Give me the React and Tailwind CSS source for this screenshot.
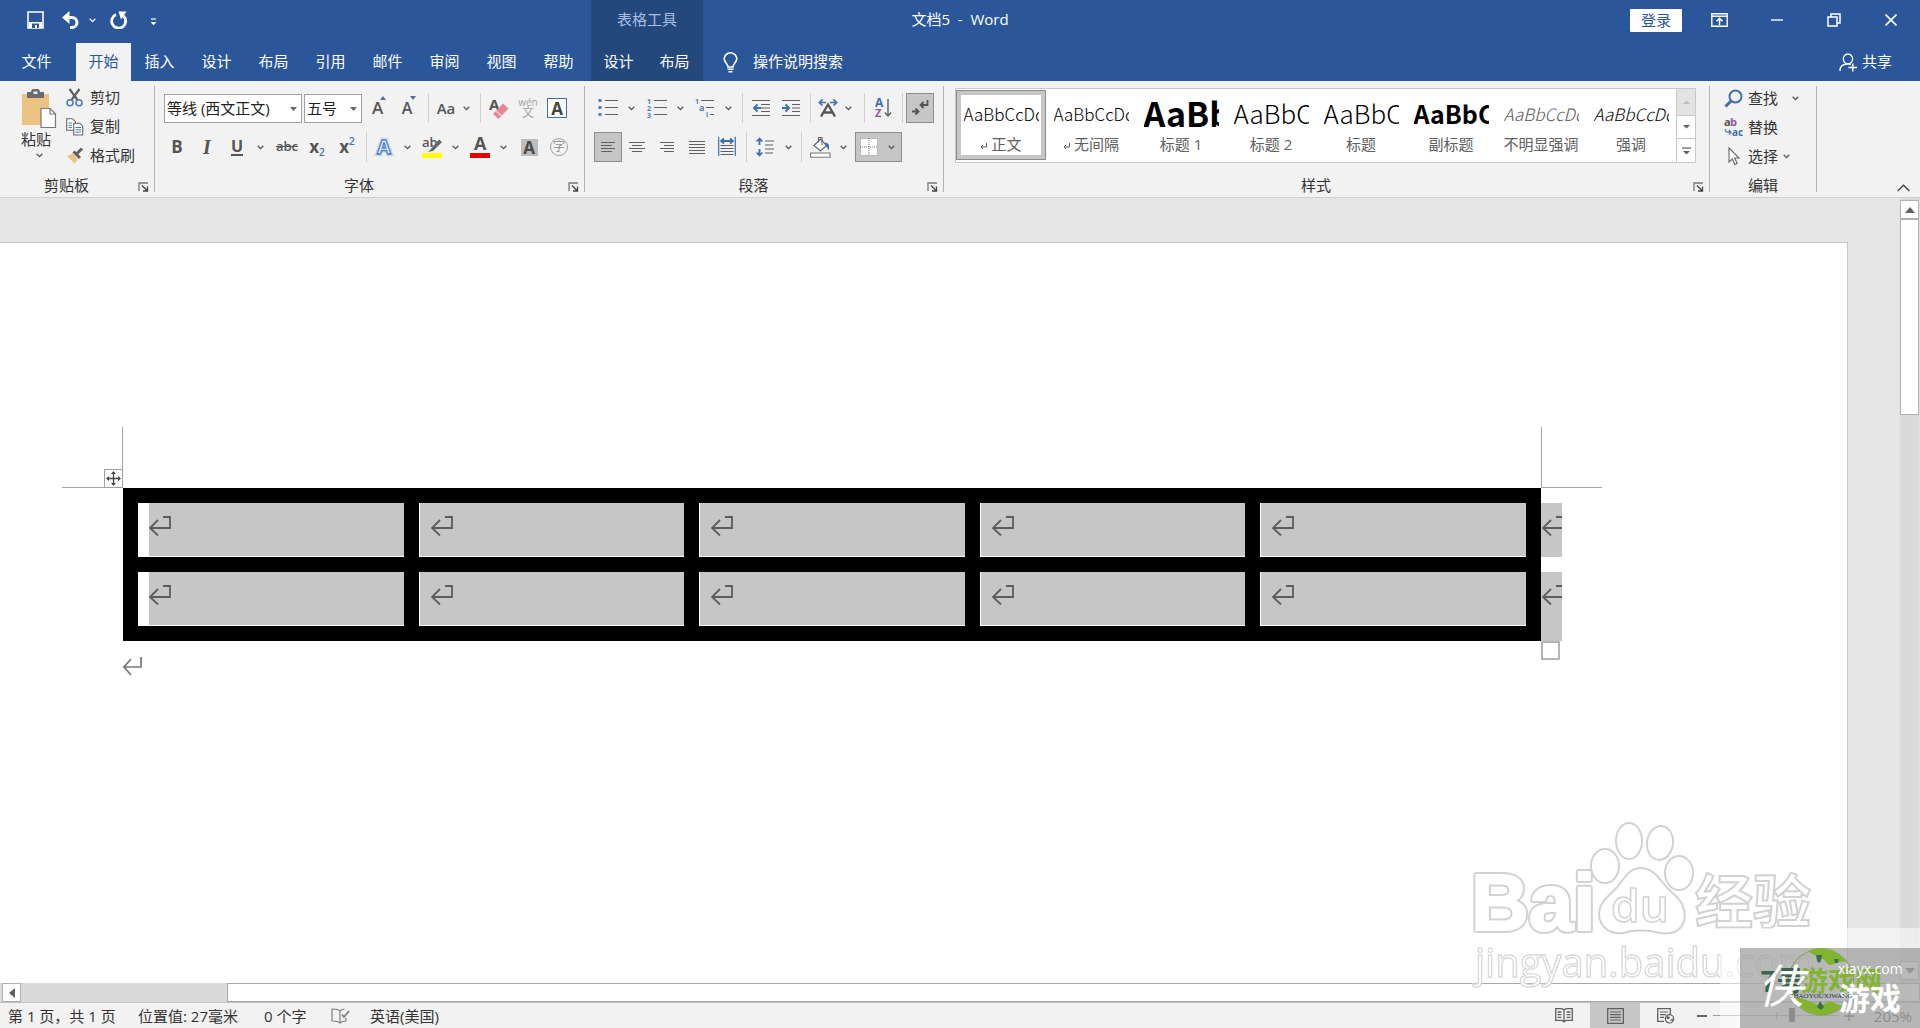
import React from "react";

/* ---------- shared pieces ---------- */

function Svg({ w, h, children, className = "" }) {
  return (
    <svg width={w} height={h} viewBox={`0 0 ${w} ${h}`} fill="none" className={`shrink-0 ${className}`} aria-hidden="true">
      {children}
    </svg>
  );
}

const Caret = () => (
  <Svg w={7} h={5}>
    <path d="M0.7 0.8 L3.5 3.6 L6.3 0.8" stroke="#555" strokeWidth="1.3" />
  </Svg>
);

const Sep = ({ className = "" }) => (
  <span className={`flex w-2 shrink-0 justify-center ${className}`}>
    <span className="h-[30px] w-px bg-[#d0d0d0]" />
  </span>
);

function Tool({ label, children, className = "w-[30px]" }) {
  return (
    <button type="button" aria-label={label} title={label} className={`flex h-[30px] shrink-0 items-center justify-center ${className}`}>
      {children}
    </button>
  );
}

function Split({ label, children, className = "" }) {
  return (
    <span className={`flex shrink-0 ${className}`}>
      <Tool label={label}>{children}</Tool>
      <Tool label={`${label} 选项`} className="w-4">
        <Caret />
      </Tool>
    </span>
  );
}

function Launcher({ label }) {
  return (
    <button type="button" aria-label={label} className="flex w-4 shrink-0 items-center justify-start pt-[2px]">
      <Svg w={11} h={10}>
        <path d="M1 9 V1 H10" stroke="#777" strokeWidth="1.3" />
        <path d="M4 3.5 L9 8.5 M9.5 4.5 V9 H5" stroke="#444" strokeWidth="1.3" />
      </Svg>
    </button>
  );
}

function Group({ label, launcher = true, className = "", children }) {
  return (
    <section aria-label={label} className={`flex h-[106px] shrink-0 flex-col justify-between border-r border-[#b4b4b4] ${className}`}>
      {children}
      <div className="flex h-[13px] items-center text-[15px] leading-[13px] text-[#333]">
        <span className={`flex-1 text-center ${launcher ? "pr-[5px]" : ""}`}>{label}</span>
        {launcher && <Launcher label={`${label}设置`} />}
      </div>
    </section>
  );
}

/* ---------- title bar ---------- */

const TABS = ["插入", "设计", "布局", "引用", "邮件", "审阅", "视图", "帮助"];

function Header() {
  return (
    <header className="relative flex h-[81px] shrink-0 justify-between bg-[#2b579a] text-[15px] text-white">
      <div className="flex">
        <div className="flex w-[591px] flex-col justify-between">
          <div className="flex h-10 items-center pl-[27px]">
            <button type="button" aria-label="保存">
              <Svg w={17} h={18}>
                <path d="M1 1 H16 V17 H1 Z" stroke="#fff" strokeWidth="1.6" />
                <path d="M2 11 H15 V17 H2 Z" fill="#fff" />
                <path d="M5 12.5 H12 V17 H5 Z" fill="#2b579a" />
                <path d="M8 14 H10 V17 H8 Z" fill="#fff" />
              </Svg>
            </button>
            <button type="button" aria-label="撤消" className="ml-[17px]">
              <Svg w={20} h={18}>
                <path d="M5 6.5 H11 A5 5 0 0 1 11 16.5 H9" stroke="#fff" strokeWidth="3" />
                <path d="M8.5 0 L1 6.5 L8.5 13 Z" fill="#fff" />
              </Svg>
            </button>
            <button type="button" aria-label="撤消选项" className="ml-2">
              <Svg w={7} h={5}>
                <path d="M0.7 0.8 L3.5 3.6 L6.3 0.8" stroke="#fff" strokeWidth="1.3" />
              </Svg>
            </button>
            <button type="button" aria-label="重复" className="ml-[14px]">
              <Svg w={18} h={18}>
                <path d="M6 3.6 A7 7 0 1 0 13.5 5" stroke="#fff" strokeWidth="2.8" />
                <path d="M8.5 0.5 H16.5 L11 8.5 Z" fill="#fff" />
              </Svg>
            </button>
            <button type="button" aria-label="自定义快速访问工具栏" className="ml-[22px] mt-1">
              <Svg w={7} h={8}>
                <path d="M1 1 H6" stroke="#fff" strokeWidth="1.2" />
                <path d="M0.5 4 H6.5 L3.5 7.2 Z" fill="#fff" />
              </Svg>
            </button>
          </div>
          <nav className="flex h-[38px] items-stretch">
            <button type="button" className="w-[76px] pr-[3px] pb-[2px]">文件</button>
            <button type="button" className="w-[55px] bg-[#f2f2f2] pb-[2px] text-[#2b579a]">开始</button>
            {TABS.map((t) => (
              <button key={t} type="button" className="w-[57px] pb-[2px]">
                {t}
              </button>
            ))}
          </nav>
        </div>
        <div className="flex w-28 flex-col justify-between bg-[#24477c]">
          <div className="flex h-10 items-center justify-center pb-[2px] text-[#a6bfe4]">表格工具</div>
          <div className="flex h-[38px] pb-[2px]">
            <button type="button" className="w-[55px]">设计</button>
            <button type="button" className="w-[57px]">布局</button>
          </div>
        </div>
        <button type="button" className="flex h-[38px] items-center gap-[15px] self-end pl-5">
          <Svg w={15} h={21}>
            <path d="M5 15 C5 12 1.2 10.5 1.2 6.8 A6.3 6 0 0 1 13.8 6.8 C13.8 10.5 10 12 10 15 Z" stroke="#fff" strokeWidth="1.6" />
            <path d="M4.5 17.2 H10.5 M5.5 19.8 H9.5" stroke="#fff" strokeWidth="1.6" />
          </Svg>
          <span className="pb-[2px]">操作说明搜索</span>
        </button>
      </div>

      <div className="absolute left-1/2 flex h-10 -translate-x-1/2 items-center pb-[2px] whitespace-pre">文档5  -  Word</div>

      <div className="flex flex-col items-end justify-between">
        <div className="flex h-10 items-center pr-[23px]">
          <button type="button" className="h-[23px] w-[52px] rounded-[1px] bg-white leading-[23px] text-[#2b579a]">登录</button>
          <button type="button" aria-label="功能区显示选项" className="ml-[29px]">
            <Svg w={17} h={14}>
              <path d="M0.8 0.8 H16.2 V13.2 H0.8 Z" stroke="#fff" strokeWidth="1.4" />
              <path d="M1 3.2 H16" stroke="#fff" strokeWidth="1.4" />
              <path d="M8.5 12 V5.5 M5.5 8.3 L8.5 5.3 L11.5 8.3" stroke="#fff" strokeWidth="1.5" />
            </Svg>
          </button>
          <button type="button" aria-label="最小化" className="ml-[43px]">
            <Svg w={12} h={14}>
              <path d="M0 7 H12" stroke="#fff" strokeWidth="1.4" />
            </Svg>
          </button>
          <button type="button" aria-label="还原" className="ml-11">
            <Svg w={14} h={14}>
              <path d="M1 4 H10 V13 H1 Z M4 4 V1 H13 V10 H10" stroke="#fff" strokeWidth="1.5" />
            </Svg>
          </button>
          <button type="button" aria-label="关闭" className="ml-11">
            <Svg w={12} h={12}>
              <path d="M0.5 0.5 L11.5 11.5 M11.5 0.5 L0.5 11.5" stroke="#fff" strokeWidth="1.6" />
            </Svg>
          </button>
        </div>
        <button type="button" className="flex h-[38px] items-center gap-1 pr-[28px]">
          <Svg w={19} h={19}>
            <path d="M9 1 A4.7 5 0 1 1 8.9 1 M1 18 C1 13 4.5 11 8.5 11 C10 11 11 11.3 11.8 11.8" stroke="#fff" strokeWidth="1.3" />
            <path d="M9.5 14.5 H18 M13.8 10.5 V18.5" stroke="#fff" strokeWidth="1.4" />
          </Svg>
          <span className="pb-px">共享</span>
        </button>
      </div>
    </header>
  );
}

/* ---------- ribbon groups ---------- */

function ClipboardGroup() {
  return (
    <Group label="剪贴板" className="w-[155px]">
      <div className="flex pl-[21px] pt-[3px]">
        <button type="button" className="flex w-9 flex-col items-center">
          <Svg w={36} h={40}>
            <path d="M1 5 H28 V36 H1 Z" fill="#eac282" />
            <path d="M6 3 H10 A4.5 4 0 0 1 19 3 H23 V9 H6 Z" fill="#6b6b6b" />
            <path d="M12.5 2.5 H16.5 V5 H12.5 Z" fill="#eee" />
            <path d="M20 19.5 H29 L34.5 25 V38.5 H20 Z" fill="#fff" stroke="#777" strokeWidth="1.2" />
            <path d="M29 19.5 V25 H34.5" stroke="#777" strokeWidth="1.2" />
          </Svg>
          <span className="-ml-[6px] text-[15px] leading-5 whitespace-nowrap text-[#333]">粘贴</span>
          <span className="mt-1">
            <Caret />
          </span>
        </button>
        <div className="-mt-[6px] ml-[9px] flex flex-col text-[15px] text-[#333]">
          <button type="button" className="flex h-[29px] items-center gap-[6px]">
            <Svg w={18} h={19}>
              <path d="M3.5 1 L11.5 12 M13.5 1 L5.5 12" stroke="#606060" strokeWidth="2.2" />
              <circle cx="4" cy="14.8" r="3" stroke="#4a7ab5" strokeWidth="1.5" />
              <circle cx="13" cy="14.8" r="3" stroke="#4a7ab5" strokeWidth="1.5" />
            </Svg>
            剪切
          </button>
          <button type="button" className="flex h-[29px] items-center gap-[6px]">
            <Svg w={18} h={18}>
              <path d="M0.7 0.7 H6.5 L9.5 3.7 V12.3 H0.7 Z" fill="#fff" stroke="#666" strokeWidth="1.1" />
              <path d="M2.5 5 H6 M2.5 7.3 H6 M2.5 9.6 H6" stroke="#4a7ab5" />
              <path d="M7.7 5.2 H13.7 L16.7 8.2 V17 H7.7 Z" fill="#fff" stroke="#666" strokeWidth="1.1" />
              <path d="M9.5 9.5 H15 M9.5 11.8 H15 M9.5 14.1 H15" stroke="#4a7ab5" />
            </Svg>
            复制
          </button>
          <button type="button" className="flex h-[29px] items-center gap-[6px]">
            <Svg w={18} h={18}>
              <path d="M1 9 L7 6.5 L12 12 L8.5 16.5 Z" fill="#eac282" />
              <path d="M6.5 5.5 L8.7 3.6 L15 10 L13 12 Z" fill="#606060" />
              <path d="M11 6.5 L16 1.5" stroke="#606060" strokeWidth="3" />
            </Svg>
            格式刷
          </button>
        </div>
      </div>
    </Group>
  );
}

function Combo({ label, value, className }) {
  return (
    <span className={`relative flex h-[29px] shrink-0 ${className}`}>
      <select aria-label={label} defaultValue={value} className="w-full appearance-none border border-[#a0a0a0] bg-white pl-[2px] text-[15px] text-[#222]">
        <option>{value}</option>
      </select>
      <Svg w={7} h={4} className="pointer-events-none absolute top-[13px] right-[5px]">
        <path d="M0 0 H7 L3.5 4 Z" fill="#666" />
      </Svg>
    </span>
  );
}

function FontGroup() {
  return (
    <Group label="字体" className="w-[430px]">
      <div className="flex flex-col gap-[9px] pt-[7px] pl-[7px] text-[#555]">
        <div className="flex items-center pl-[2px]">
          <Combo label="字体名称" value="等线 (西文正文)" className="w-[138px]" />
          <Combo label="字号" value="五号" className="ml-[2px] w-[58px]" />
          <Tool label="增大字号" className="ml-[2px] w-[30px]">
            <span className="flex items-start">
              <span className="text-[17px] leading-6 font-semibold">A</span>
              <Svg w={6} h={4} className="-ml-[3px]">
                <path d="M0 4 H6 L3 0 Z" fill="#4a6fa8" />
              </Svg>
            </span>
          </Tool>
          <Tool label="减小字号">
            <span className="flex items-start">
              <span className="text-base leading-6 font-semibold">A</span>
              <Svg w={6} h={4} className="-ml-[2px]">
                <path d="M0 0 H6 L3 4 Z" fill="#4a6fa8" />
              </Svg>
            </span>
          </Tool>
          <Sep />
          <Tool label="更改大小写" className="w-7">
            <span className="text-[15px] font-semibold">Aa</span>
          </Tool>
          <Tool label="大小写选项" className="w-3">
            <Caret />
          </Tool>
          <Sep className="ml-[4px]" />
          <Tool label="清除所有格式">
            <Svg w={20} h={23}>
              <text x="0" y="13" fontFamily="Open Sans" fontWeight="700" fontSize="15" fill="#555">A</text>
              <path d="M4 17 L14 6.5 L19.5 11.5 L9.5 22 Z" fill="#e88794" />
              <path d="M7 14 L12.5 19" stroke="#f7d3d7" strokeWidth="1.2" />
            </Svg>
          </Tool>
          <Tool label="拼音指南" className="w-7">
            <span className="flex flex-col items-center text-[#a3a3a3]">
              <span className="text-[10px] leading-[8px]">wén</span>
              <span className="text-xs leading-[13px]">文</span>
            </span>
          </Tool>
          <Tool label="字符边框">
            <span className="flex h-5 w-5 items-center justify-center border border-[#3f6fae] bg-white text-[17px] leading-none font-bold text-[#444]">A</span>
          </Tool>
        </div>
        <div className="flex items-center">
          <Tool label="加粗">
            <span className="text-[17px] font-bold">B</span>
          </Tool>
          <Tool label="倾斜">
            <span className="font-['Liberation_Serif',serif] text-xl font-bold italic">I</span>
          </Tool>
          <Split label="下划线" className="mr-1">
            <span className="border-b-2 border-[#555] text-base leading-4 font-bold">U</span>
          </Split>
          <Tool label="删除线">
            <span className="text-[13px] font-semibold line-through">abc</span>
          </Tool>
          <Tool label="下标">
            <span className="flex items-end">
              <span className="text-[17px] leading-5 font-bold">x</span>
              <span className="text-[10px] leading-[10px] font-semibold text-[#3f6fae]">2</span>
            </span>
          </Tool>
          <Tool label="上标">
            <span className="flex items-start">
              <span className="text-[17px] leading-5 font-bold">x</span>
              <span className="text-[10px] leading-[8px] font-semibold text-[#3f6fae]">2</span>
            </span>
          </Tool>
          <Sep />
          <Split label="文本效果" className="-ml-px mr-[2px]">
            <Svg w={20} h={22}>
              <text x="3" y="18" fontFamily="Open Sans" fontWeight="700" fontSize="20" fill="#fff" stroke="#c3d9f3" strokeWidth="4">A</text>
              <text x="3" y="18" fontFamily="Open Sans" fontWeight="700" fontSize="20" fill="#fff" stroke="#4a80c4" strokeWidth="1.3">A</text>
            </Svg>
          </Split>
          <Split label="突出显示颜色" className="mr-[2px]">
            <Svg w={21} h={22}>
              <text x="0" y="11" fontFamily="Open Sans" fontWeight="600" fontSize="13" fill="#555">ab</text>
              <path d="M8 14 L17 3.5 L20 6 L11 15 L6 16 Z" fill="#666" />
              <path d="M0 17 H20 V22 H0 Z" fill="#ffff00" />
            </Svg>
          </Split>
          <Split label="字体颜色" className="mr-[3px]">
            <Svg w={20} h={22}>
              <text x="4" y="14" fontFamily="Open Sans" fontWeight="700" fontSize="18" fill="#555">A</text>
              <path d="M0 17 H20 V22 H0 Z" fill="#e80000" />
            </Svg>
          </Split>
          <Tool label="字符底纹">
            <span className="flex h-[17px] w-[17px] items-center justify-center bg-[#bdbdbd] text-[17px] leading-none font-bold text-[#4a4a4a]">A</span>
          </Tool>
          <Tool label="带圈字符">
            <span className="flex h-[18px] w-[18px] items-center justify-center rounded-full border border-[#a3a3a3] text-xs leading-none text-[#8e8e8e]">字</span>
          </Tool>
        </div>
      </div>
    </Group>
  );
}

/* A paragraph-alignment drawing: each entry is the [start, end] of one rule. */
function Lines({ rows, step = 3 }) {
  return (
    <Svg w={18} h={rows.length * step}>
      {rows.map(([a, b], i) => (
        <path key={i} d={`M${a} ${i * step + 1.5} H${b}`} stroke="#606060" strokeWidth="1" shapeRendering="crispEdges" />
      ))}
    </Svg>
  );
}

function ParagraphGroup() {
  return (
    <Group label="段落" className="w-[359px]">
      <div className="flex flex-col gap-[9px] pt-[7px] pl-2">
        <div className="flex items-center">
          <Split label="项目符号" className="mr-[3px]">
            <Svg w={20} h={20}>
              <path d="M0.5 1 H3.5 V4 H0.5 Z M0.5 8 H3.5 V11 H0.5 Z M0.5 15 H3.5 V18 H0.5 Z" fill="#4a80c4" />
              <path d="M7 2.5 H20 M7 9.5 H20 M7 16.5 H20" stroke="#606060" strokeWidth="1.2" />
            </Svg>
          </Split>
          <Split label="编号" className="mr-[2px]">
            <Svg w={20} h={20}>
              <text x="0" y="6" fontFamily="Open Sans" fontWeight="700" fontSize="7" fill="#4a80c4">1</text>
              <text x="0" y="13" fontFamily="Open Sans" fontWeight="700" fontSize="7" fill="#4a80c4">2</text>
              <text x="0" y="20" fontFamily="Open Sans" fontWeight="700" fontSize="7" fill="#4a80c4">3</text>
              <path d="M7 2.5 H20 M7 9.5 H20 M7 16.5 H20" stroke="#606060" strokeWidth="1.2" />
            </Svg>
          </Split>
          <Split label="多级列表" className="mr-[2px]">
            <Svg w={20} h={20}>
              <text x="0" y="6" fontFamily="Open Sans" fontWeight="700" fontSize="7" fill="#4a80c4">1</text>
              <text x="4" y="13" fontFamily="Open Sans" fontWeight="700" fontSize="9" fill="#4a80c4">a</text>
              <text x="11" y="19" fontFamily="Open Sans" fontWeight="700" fontSize="7" fill="#4a80c4">i</text>
              <path d="M6 2.5 H19 M11 9.5 H19 M15 16.5 H19" stroke="#606060" strokeWidth="1.2" />
            </Svg>
          </Split>
          <Sep />
          <Tool label="减少缩进量">
            <Svg w={19} h={18}>
              <path d="M0 1.5 H18 M9 5.5 H18 M9 9 H18 M9 12.5 H18 M0 16.5 H18" stroke="#606060" strokeWidth="1.1" />
              <path d="M9 9 H2 M5.5 5.5 L2 9 L5.5 12.5" stroke="#3f6fae" strokeWidth="2" />
            </Svg>
          </Tool>
          <Tool label="增加缩进量">
            <Svg w={19} h={18}>
              <path d="M0 1.5 H18 M10 5.5 H18 M10 9 H18 M10 12.5 H18 M0 16.5 H18" stroke="#606060" strokeWidth="1.1" />
              <path d="M0 9 H7 M3.5 5.5 L7 9 L3.5 12.5" stroke="#3f6fae" strokeWidth="2" />
            </Svg>
          </Tool>
          <Sep />
          <Tool label="中文版式" className="w-7">
            <Svg w={20} h={18}>
              <path d="M2 3.5 H8 M12 3.5 H18 M4.5 0.5 L1.3 3.5 L4.5 6.5 M15.5 0.5 L18.7 3.5 L15.5 6.5" stroke="#3f6fae" strokeWidth="1.6" />
              <path d="M3 17.5 L10 5.5 L17 17.5 M6 13.5 H14" stroke="#555" strokeWidth="2.3" />
            </Svg>
          </Tool>
          <Tool label="中文版式选项" className="w-3">
            <Caret />
          </Tool>
          <Sep className="ml-[6px]" />
          <Tool label="排序">
            <Svg w={17} h={20}>
              <text x="0" y="9" fontFamily="Open Sans" fontWeight="700" fontSize="12" fill="#3f6fae">A</text>
              <text x="0" y="19" fontFamily="Open Sans" fontWeight="700" fontSize="11" fill="#9355a8">Z</text>
              <path d="M13 1 V18 M9.8 14.5 L13 18 L16.2 14.5" stroke="#606060" strokeWidth="1.4" />
            </Svg>
          </Tool>
          <Sep />
          <Tool label="显示编辑标记" className="w-7 border border-[#8c8c8c] bg-[#c6c6c6]">
            <Svg w={18} h={18}>
              <path d="M16.5 1 V6 H10 M12.5 3 L9.5 6 L12.5 9" stroke="#555" strokeWidth="1.8" />
              <path d="M1 12.5 H7 M4.5 9.5 L7.5 12.5 L4.5 15.5" stroke="#555" strokeWidth="1.8" />
            </Svg>
          </Tool>
        </div>
        <div className="flex items-center">
          <Tool label="左对齐" className="ml-px w-7 border border-[#8c8c8c] bg-[#c6c6c6]">
            <Lines rows={[[2, 16], [2, 13], [2, 16], [2, 13]]} />
          </Tool>
          <Tool label="居中">
            <Lines rows={[[1, 17], [4, 14], [1, 17], [4, 14]]} />
          </Tool>
          <Tool label="右对齐">
            <Lines rows={[[2, 16], [6, 16], [2, 16], [6, 16]]} />
          </Tool>
          <Tool label="两端对齐">
            <Lines rows={[[1, 17], [1, 17], [1, 17], [1, 17], [1, 17]]} />
          </Tool>
          <Tool label="分散对齐">
            <Svg w={19} h={20}>
              <path d="M0.7 0 V19 M17.3 0 V19" stroke="#3f6fae" strokeWidth="1.2" />
              <path d="M4 4 H14 M6 1.3 L3 4 L6 6.7 M12 1.3 L15 4 L12 6.7" stroke="#3f6fae" strokeWidth="1.8" />
              <path d="M2.5 8.5 H15.5 M2.5 11.5 H15.5 M2.5 14.5 H15.5 M2.5 17.5 H15.5" stroke="#606060" strokeWidth="1.2" />
            </Svg>
          </Tool>
          <Sep />
          <Split label="行和段落间距">
            <Svg w={19} h={20}>
              <path d="M3.5 2 V8 M3.5 12 V18 M0.7 4.5 L3.5 1.5 L6.3 4.5 M0.7 15.5 L3.5 18.5 L6.3 15.5" stroke="#3f6fae" strokeWidth="1.8" />
              <path d="M9 4 H18 M9 8 H17 M9 12 H18 M9 16 H17" stroke="#606060" strokeWidth="1.2" />
            </Svg>
          </Split>
          <Sep className="ml-px" />
          <Split label="底纹" className="mr-1">
            <Svg w={21} h={22}>
              <path d="M4 9.5 L10.5 3 L16.5 9.5 L10.5 15 Z" fill="#fff" stroke="#666" strokeWidth="1.2" />
              <path d="M8.5 6.5 V1.5 H12 V9" stroke="#666" strokeWidth="1.1" />
              <path d="M15 6.5 C19 7 20 10 18.5 14.5 C17.5 12.5 17 11 15 8.5 Z" fill="#3f6fae" />
              <path d="M0.6 17 H20 V21.2 H0.6 Z" fill="#fff" stroke="#777" strokeWidth="1.1" />
            </Svg>
          </Split>
          <span className="flex border border-[#8c8c8c] bg-[#c6c6c6]">
            <button type="button" aria-label="边框" className="flex h-7 w-[26px] items-center justify-center">
              <Svg w={18} h={18}>
                <path d="M0 0 H18 V18 H0 Z" fill="#fff" />
                <path d="M0.5 0.5 H17.5 V17.5 H0.5 Z M9 0 V18 M0 9 H18" stroke="#777" strokeDasharray="1 1" />
              </Svg>
            </button>
            <button type="button" aria-label="边框选项" className="flex h-7 w-[19px] items-center justify-center">
              <Caret />
            </button>
          </span>
        </div>
      </div>
    </Group>
  );
}

const STYLES = [
  { name: "正文", mark: true, sample: "AaBbCcDd", cls: "text-[17px] font-light text-black", selected: true },
  { name: "无间隔", mark: true, sample: "AaBbCcDd", cls: "text-[17px] font-light text-black" },
  { name: "标题 1", sample: "AaBbCc", cls: "text-[34px] font-bold text-black" },
  { name: "标题 2", sample: "AaBbCc", cls: "text-[26px] font-light text-black" },
  { name: "标题", sample: "AaBbCc", cls: "text-[26px] font-light text-black" },
  { name: "副标题", sample: "AaBbCc", cls: "text-[25px] font-bold text-black" },
  { name: "不明显强调", sample: "AaBbCcDd", cls: "text-[17px] font-light italic text-[#555]" },
  { name: "强调", sample: "AaBbCcDd", cls: "text-[17px] font-light italic text-black" },
];

function StylesGroup() {
  return (
    <Group label="样式" className="w-[766px]">
      <div className="pt-[2px] pl-[11px]">
        <div className="flex h-[75px] w-[741px] border border-[#c8c8c8] bg-white">
          {STYLES.map((s) => (
            <button
              key={s.name}
              type="button"
              className={`mt-px flex h-[70px] w-[90px] shrink-0 flex-col items-center border ${
                s.selected ? "border-[#8c8c8c] ring-4 ring-[#c6c6c6] ring-inset" : "border-transparent"
              }`}
            >
              <span
                className={`mt-[3px] flex h-[38px] w-[75px] items-center overflow-hidden font-['Noto_Sans_CJK_SC',sans-serif] leading-none whitespace-nowrap ${s.cls}`}
              >
                {s.sample}
              </span>
              <span className="mt-[2px] flex items-center gap-1 text-[15px] leading-5 whitespace-nowrap text-[#606060]">
                {s.mark && (
                  <Svg w={7} h={7} className="mt-1">
                    <path d="M6.5 0 V4 H1 M3 2 L1 4 L3 6" stroke="#606060" />
                  </Svg>
                )}
                {s.name}
              </span>
            </button>
          ))}
          <div className="ml-auto flex w-[19px] flex-col border-l border-[#c8c8c8]">
            <button type="button" aria-label="上一行" className="flex h-[26px] items-center justify-center bg-[#e3e3e3]">
              <Svg w={7} h={4}>
                <path d="M0 4 H7 L3.5 0.5 Z" fill="#bdbdbd" />
              </Svg>
            </button>
            <button type="button" aria-label="下一行" className="flex h-6 items-center justify-center border-y border-[#c8c8c8]">
              <Svg w={7} h={4}>
                <path d="M0 0 H7 L3.5 3.5 Z" fill="#606060" />
              </Svg>
            </button>
            <button type="button" aria-label="其他样式" className="flex flex-1 items-center justify-center">
              <Svg w={9} h={8}>
                <path d="M0 1 H9" stroke="#606060" strokeWidth="1.2" />
                <path d="M1 4 H8 L4.5 7.5 Z" fill="#606060" />
              </Svg>
            </button>
          </div>
        </div>
      </div>
    </Group>
  );
}

function EditingGroup() {
  return (
    <Group label="编辑" launcher={false} className="w-[107px]">
      <div className="-mt-[2px] flex flex-col pl-[14px] text-[15px] text-[#333]">
        <button type="button" className="flex h-[29px] items-center">
          <Svg w={19} h={19}>
            <circle cx="11.5" cy="7.5" r="6" stroke="#3f6fae" strokeWidth="2" />
            <path d="M7 12 L1.5 17.5" stroke="#3f6fae" strokeWidth="3" />
          </Svg>
          <span className="mr-[14px] ml-[5px]">查找</span>
          <Caret />
        </button>
        <button type="button" className="flex h-[29px] items-center">
          <Svg w={19} h={19}>
            <text x="0" y="8" fontFamily="Open Sans" fontWeight="700" fontSize="11" fill="#555">a</text>
            <text x="6" y="8" fontFamily="Open Sans" fontWeight="700" fontSize="11" fill="#9355a8">b</text>
            <text x="8" y="18" fontFamily="Open Sans" fontWeight="700" fontSize="10" fill="#3f6fae">ac</text>
            <path d="M1 11 C1 14 3 14.3 7 14.3 M4.8 12 L7 14.3 L4.8 16.6" stroke="#3f6fae" strokeWidth="1.1" />
          </Svg>
          <span className="ml-[5px]">替换</span>
        </button>
        <button type="button" className="flex h-[29px] items-center">
          <Svg w={19} h={19}>
            <path d="M5 1 V15 L8.3 12 L10.8 17.5 L13.2 16.5 L10.7 11 H15 Z" fill="#fff" stroke="#666" strokeWidth="1.1" />
          </Svg>
          <span className="mr-[5px] ml-[5px]">选择</span>
          <Caret />
        </button>
      </div>
    </Group>
  );
}

function Ribbon() {
  return (
    <div className="flex shrink-0 justify-between border-b border-[#cfcfcf] bg-[#f2f2f2] py-[5px]">
      <div className="flex">
        <ClipboardGroup />
        <FontGroup />
        <ParagraphGroup />
        <StylesGroup />
        <EditingGroup />
      </div>
      <button type="button" aria-label="折叠功能区" className="self-end pr-[10px]">
        <Svg w={13} h={8}>
          <path d="M0.7 7 L6.5 1.2 L12.3 7" stroke="#444" strokeWidth="1.4" />
        </Svg>
      </button>
    </div>
  );
}

/* ---------- document ---------- */

const CellMark = () => (
  <Svg w={22} h={20}>
    <path d="M1 12 H21 V1 H14 M9 4 L1 12 L9 19.5" stroke="#5c5c5c" strokeWidth="1.8" />
  </Svg>
);

const COLS = [0, 1, 2, 3, 4];

function DocumentTable() {
  return (
    <div className="relative">
      <div className="absolute -top-[61px] -left-[61px] h-[61px] w-[61px] border-r border-b border-[#a6a6a6]" />
      <div className="absolute -top-[61px] left-full h-[61px] w-[61px] border-b border-l border-[#a6a6a6]" />
      <div className="absolute -top-[19px] -left-[19px] flex h-[19px] w-[19px] items-center justify-center border border-[#a0a0a0] bg-white">
        <Svg w={15} h={15}>
          <path d="M7.5 2 V13 M2 7.5 H13" stroke="#444" strokeWidth="1.3" />
          <path d="M7.5 0 L10 3 H5 Z M7.5 15 L10 12 H5 Z M0 7.5 L3 5 V10 Z M15 7.5 L12 5 V10 Z" fill="#444" />
        </Svg>
      </div>
      <table className="w-full table-fixed border-separate border-spacing-[15px] bg-black" aria-label="文档表格">
        <tbody>
          {[0, 1].map((r) => (
            <tr key={r}>
              {COLS.map((c) => (
                <td key={c} className={`h-[54px] border-b border-l border-white bg-[#c6c6c6] p-0 align-top ${c === 0 ? "border-l-[11px]" : "pl-[11px]"}`}>
                  <div className="pt-[13px]">
                    <CellMark />
                  </div>
                </td>
              ))}
            </tr>
          ))}
        </tbody>
      </table>
      <div className="absolute top-[15px] left-full flex w-[21px] flex-col gap-[15px]">
        <div className="h-[54px] overflow-hidden bg-[#c6c6c6] pt-[13px] pl-px">
          <CellMark />
        </div>
        <div className="h-[69px] overflow-hidden bg-[#c6c6c6] pt-[13px] pl-px">
          <CellMark />
        </div>
      </div>
      <div className="absolute top-full left-full h-[19px] w-[19px] border-2 border-[#b4b4b4] bg-white" />
    </div>
  );
}

function Workspace() {
  return (
    <div className="flex min-h-0 flex-1 bg-[#e6e6e6]">
      <div className="flex min-w-0 flex-1 flex-col">
        <div className="mt-[44px] mr-[52px] min-h-0 flex-1 border-t border-r border-[#c8c8c8] bg-white pt-[245px] pr-[306px] pl-[123px]">
          <DocumentTable />
          <Svg w={20} h={19} className="mt-4">
            <path d="M1 10 H18 V0 M8 2 L1 10 L8 18" stroke="#777" strokeWidth="1.7" />
          </Svg>
        </div>
      </div>
      <div className="flex w-5 flex-col border-r border-[#e0e0e0] bg-[#dadada] pt-[2px]">
        <button type="button" aria-label="向上滚动" className="flex h-[19px] items-center justify-center border border-[#b0b0b0] bg-white">
          <Svg w={10} h={6}>
            <path d="M0 6 L5 0 L10 6 Z" fill="#606060" />
          </Svg>
        </button>
        <div className="h-[196px] border border-[#b0b0b0] bg-white" />
        <button type="button" aria-label="向下滚动" className="mt-auto mb-[3px] flex h-[19px] items-center justify-center border border-[#b0b0b0] bg-white">
          <Svg w={10} h={6}>
            <path d="M0 0 L5 6 L10 0 Z" fill="#606060" />
          </Svg>
        </button>
      </div>
    </div>
  );
}

function HorizontalScroll() {
  return (
    <div className="flex h-5 shrink-0 border-b border-[#c0c0c0] bg-[#dadada] pl-[2px]">
      <button type="button" aria-label="向左滚动" className="flex h-[19px] w-[19px] items-center justify-center border border-[#b0b0b0] bg-white">
        <Svg w={6} h={10}>
          <path d="M6 0 L0 5 L6 10 Z" fill="#606060" />
        </Svg>
      </button>
      <div className="ml-[206px] h-[19px] flex-1 border border-[#a8a8a8] bg-white" />
    </div>
  );
}

/* ---------- status bar ---------- */

function StatusBar() {
  return (
    <footer className="flex h-[25px] shrink-0 items-center justify-between bg-[#f2f2f2] text-[15px] text-[#333]">
      <div className="flex items-center pt-px pl-2 whitespace-nowrap">
        <span className="w-[130px]">第 1 页，共 1 页</span>
        <span className="w-[126px]">位置值: 27毫米</span>
        <span className="w-[67px]">0 个字</span>
        <Svg w={19} h={16}>
          <path d="M9 3 C7 1 4 1 1 1 V13 C4 13 7 13 9 15 C11 13 13 13 15 13 V10 M9 3 V15 M9 3 C10.5 1.5 12 1 13.5 1" stroke="#808080" strokeWidth="1.2" />
          <path d="M11 6.5 L13 9 L18 3" stroke="#808080" strokeWidth="1.8" />
        </Svg>
        <span className="ml-5">英语(美国)</span>
      </div>
      <div className="flex h-full items-center pr-[8px]">
        <button type="button" aria-label="阅读视图" className="mr-[17px]">
          <Svg w={18} h={15}>
            <path d="M9 2 L7 0.7 H0.7 V12.3 H7 L9 14 L11 12.3 H17.3 V0.7 H11 Z M9 2 V14" stroke="#606060" strokeWidth="1.3" />
            <path d="M2.5 4 H6.5 M2.5 6.7 H6.5 M2.5 9.4 H6.5 M11.5 4 H15.5 M11.5 6.7 H15.5 M11.5 9.4 H15.5" stroke="#606060" strokeWidth="1.3" />
          </Svg>
        </button>
        <button type="button" aria-label="页面视图" className="flex h-full w-[50px] items-center justify-center bg-[#c6c6c6]">
          <Svg w={17} h={16}>
            <path d="M0.7 0.7 H16.3 V15.3 H0.7 Z" stroke="#606060" strokeWidth="1.3" />
            <path d="M3 4 H14 M3 6.7 H14 M3 9.4 H14 M3 12 H14" stroke="#606060" strokeWidth="1.2" />
          </Svg>
        </button>
        <button type="button" aria-label="Web 版式视图" className="ml-[17px]">
          <Svg w={18} h={16}>
            <path d="M7 13.3 H0.7 V0.7 H13.3 V6" stroke="#606060" strokeWidth="1.3" />
            <path d="M3 4 H11 M3 6.7 H9 M3 9.4 H7" stroke="#606060" strokeWidth="1.2" />
            <circle cx="12.5" cy="10.8" r="4.2" fill="#f2f2f2" stroke="#606060" strokeWidth="1.2" />
            <path d="M10 8 L13 9 L12 11 L9.5 11 Z M13 12 L16 10.5 L15.5 13.5 Z" fill="#606060" />
          </Svg>
        </button>
        <button type="button" aria-label="缩小" className="ml-[22px]">
          <Svg w={10} h={10}>
            <path d="M0 5 H10" stroke="#333" strokeWidth="1.5" />
          </Svg>
        </button>
        <span className="relative ml-[6px] flex w-[125px] items-center">
          <span className="absolute left-1/2 h-2 w-px bg-[#a0a0a0]" />
          <input
            type="range"
            aria-label="显示比例"
            min="0"
            max="100"
            defaultValue="64"
            className="relative h-4 w-full appearance-none bg-transparent [&::-webkit-slider-runnable-track]:h-px [&::-webkit-slider-runnable-track]:bg-[#a0a0a0] [&::-webkit-slider-thumb]:-mt-[7px] [&::-webkit-slider-thumb]:h-[14px] [&::-webkit-slider-thumb]:w-[6px] [&::-webkit-slider-thumb]:appearance-none [&::-webkit-slider-thumb]:bg-[#444]"
          />
        </span>
        <button type="button" aria-label="放大" className="ml-[6px]">
          <Svg w={10} h={10}>
            <path d="M0 5 H10 M5 0 V10" stroke="#444" strokeWidth="1.3" />
          </Svg>
        </button>
        <span className="w-[58px] pt-px text-right">205%</span>
      </div>
    </footer>
  );
}

/* ---------- watermarks over the lower right corner ---------- */

function Watermarks() {
  return (
    <div className="pointer-events-none absolute right-0 bottom-0 h-[218px] w-[460px]">
      <svg width="460" height="218" viewBox="0 0 460 218" className="absolute inset-0">
        <defs>
          <filter id="soft" x="-5%" y="-5%" width="110%" height="110%">
            <feGaussianBlur stdDeviation="0.7" />
          </filter>
        </defs>
        <g filter="url(#soft)" fill="#fff" stroke="#d2d2d2" strokeWidth="2">
          <text x="11" y="120" fontFamily="Liberation Sans" fontWeight="700" fontSize="80" stroke="#d2d2d2" strokeWidth="6" strokeLinejoin="round">Bai</text>
          <text x="11" y="120" fontFamily="Liberation Sans" fontWeight="700" fontSize="80" stroke="#fff" strokeWidth="2" aria-hidden="true">Bai</text>
          <ellipse cx="145" cy="56" rx="14" ry="17" />
          <ellipse cx="169" cy="31" rx="13" ry="18" />
          <ellipse cx="200" cy="33" rx="13" ry="17" transform="rotate(8 200 33)" />
          <ellipse cx="219" cy="63" rx="14" ry="17" />
          <path d="M181 58 C192 58 198 67 204 74 C210 82 218 86 222 94 C230 112 220 126 200 123 C188 120 174 120 163 123 C146 125 136 112 140 98 C143 88 152 84 158 76 C165 67 170 58 181 58 Z" />
          <text x="151" y="112" fontFamily="Open Sans" fontWeight="600" fontSize="46" strokeWidth="1.5">du</text>
          <text x="235" y="113" fontFamily="Noto Sans CJK SC" fontWeight="700" fontSize="58">经验</text>
          <text x="15" y="167" fontFamily="Open Sans" fontWeight="400" fontSize="40" stroke="#d8d8d8" strokeWidth="1.3">jingyan.baidu.com</text>
        </g>
      </svg>
      <div className="absolute right-0 bottom-0 h-[100px] w-[200px] bg-white/50" />
      <div className="absolute right-0 bottom-0 h-20 w-[180px] bg-[#808080]/55" />
      <svg width="200" height="108" viewBox="0 0 200 108" className="absolute right-0 bottom-0">
        <circle cx="101" cy="62" r="33" fill="none" stroke="#6b9a3a" strokeWidth="0.8" />
        <path d="M88 31 C98 26 116 26 126 42 C118 39 112 48 108 44 C102 36 96 38 88 31 Z" fill="#82b42f" />
        <path d="M74 78 C84 97 108 101 124 85 C114 86 112 78 104 84 C98 89 86 76 74 78 Z" fill="#82b42f" />
        <path d="M96 35 H102 L101 41 L99 43 L97 41 Z M114 39 L119 39 L118 43 L115 43 Z M100 81 L104 87 L101 90 L97 87 Z" fill="#3c6e4a" />
        <text x="40" y="72" fontFamily="Noto Sans CJK SC" fontWeight="700" fontSize="28" fill="#37664a">7号</text>
        <text x="81" y="71" fontFamily="Noto Sans CJK SC" fontWeight="700" fontSize="27" fill="#82b42f">游戏网</text>
        <text x="38" y="83" fontFamily="Noto Sans CJK SC" fontWeight="400" fontStyle="italic" fontSize="46" fill="#fff">侠</text>
        <text x="119" y="90" fontFamily="Noto Sans CJK SC" fontWeight="700" fontSize="31" fill="#fff">游戏</text>
        <text x="118" y="54" fontFamily="Open Sans" fontSize="14" fill="#fff">xiayx.com</text>
        <text x="70" y="78" fontFamily="Liberation Serif" fontSize="7" fill="#234">7HAOYOUXIWANG</text>
      </svg>
    </div>
  );
}

export default function App() {
  return (
    <div className="relative flex h-screen flex-col overflow-hidden font-['Open_Sans','Noto_Sans_CJK_SC',sans-serif]">
      <Header />
      <Ribbon />
      <Workspace />
      <HorizontalScroll />
      <StatusBar />
      <Watermarks />
    </div>
  );
}
